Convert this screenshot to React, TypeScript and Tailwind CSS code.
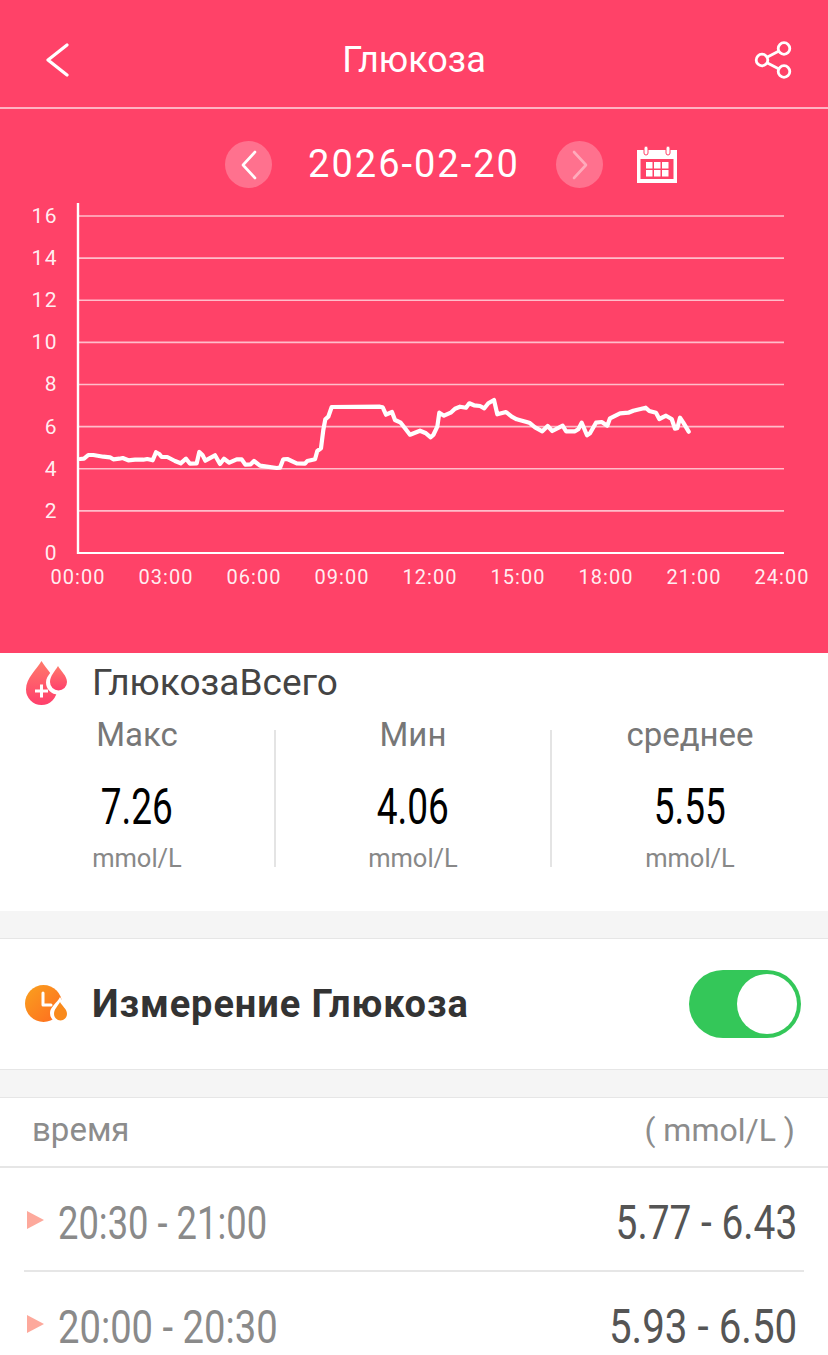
// traced from the chart at 3x: [x, y] -> x/3 + 60, y/3 + 380
const RAW = [
  [60,237],[72,236],[85,225],[100,225],[130,230],[150,232],[160,238],[178,236],[188,234],[205,241],[225,239],[250,239],[262,237],[278,241],[288,217],[298,222],[305,231],[322,231],[345,243],[362,250],[378,236],[390,251],[410,250],[418,216],[428,226],[436,242],[465,226],[480,252],[492,236],[508,248],[530,238],[545,238],[556,254],[572,253],[582,243],[600,257],[620,260],[650,264],[660,263],[670,238],[682,237],[710,250],[735,251],[742,243],[765,238],[772,213],[783,205],[790,150],[796,118],[805,110],[815,81],[960,80],[968,82],[978,104],[996,96],[1005,120],[1022,128],[1035,145],[1050,164],[1080,152],[1098,160],[1112,172],[1120,165],[1132,140],[1138,98],[1152,107],[1172,98],[1185,86],[1200,80],[1218,83],[1228,70],[1242,76],[1260,78],[1273,85],[1285,70],[1302,60],[1312,103],[1338,96],[1355,110],[1370,118],[1408,128],[1425,142],[1447,154],[1463,138],[1477,153],[1508,137],[1518,154],[1545,154],[1555,148],[1565,128],[1581,166],[1590,160],[1608,128],[1625,126],[1642,137],[1650,115],[1680,100],[1705,98],[1720,92],[1757,83],[1768,93],[1788,98],[1798,117],[1818,107],[1835,117],[1845,146],[1852,145],[1860,113],[1870,128],[1886,155],
];
const LINE = RAW.map(([x, y]) => `${(x / 3 + 60).toFixed(1)},${(y / 3 + 380).toFixed(1)}`).join(" ");

const Y_TICKS = [16, 14, 12, 10, 8, 6, 4, 2, 0];
const X_TICKS = ["00:00", "03:00", "06:00", "09:00", "12:00", "15:00", "18:00", "21:00", "24:00"];

function Chart() {
  return (
    <svg viewBox="0 190 828 463" className="block w-[828px] h-[463px]" fontFamily="Roboto, sans-serif" fill="#fff">
      {Y_TICKS.map((v, i) => {
        const y = 216 + i * 42.12;
        return (
          <g key={v}>
            {v > 0 && <line x1="78" x2="784" y1={y} y2={y} stroke="#fff" strokeOpacity="0.65" strokeWidth="1.6" />}
            <text x="58" y={y + 7} textAnchor="end" fontSize="21" letterSpacing="1.5" fillOpacity="0.92">{v}</text>
          </g>
        );
      })}
      <line x1="78" x2="78" y1="203" y2="554" stroke="#fff" strokeWidth="2.4" />
      <line x1="78" x2="784" y1="553" y2="553" stroke="#fff" strokeWidth="2" />
      {X_TICKS.map((t, i) => (
        <text key={t} x={78 + i * 88} y="584" textAnchor="middle" fontSize="20" fillOpacity="0.92" letterSpacing="1">{t}</text>
      ))}
      <polyline points={LINE} fill="none" stroke="#fff" strokeWidth="4.2" strokeLinejoin="round" strokeLinecap="round" />
    </svg>
  );
}

function BackIcon() {
  return (
    <svg viewBox="0 0 23 34" className="w-[23px] h-[34px]" fill="none" stroke="#fff" strokeWidth="3.2" strokeLinecap="round" strokeLinejoin="round">
      <path d="M21 2 2 17l19 15" />
    </svg>
  );
}

function ShareIcon() {
  return (
    <svg viewBox="0 0 38 38" className="w-[38px] h-[38px]" fill="none" stroke="#fff" strokeWidth="2.8">
      <circle cx="30" cy="7.500" r="5.800" />
      <circle cx="30" cy="30.500" r="5.800" />
      <circle cx="8" cy="19" r="5.800" />
      <path d="M13 16.300 25 10M13 21.700 25 28" />
    </svg>
  );
}

function Caret({ dir, className }: { dir: "left" | "right"; className?: string }) {
  return (
    <svg viewBox="0 0 18 30" className={`w-[18px] h-[30px] ${className ?? ""}`} fill="none" stroke="#fff" strokeWidth="2.6" strokeLinecap="round" strokeLinejoin="round">
      <path d={dir === "left" ? "M15 2 3 15l12 13" : "M3 2l12 13L3 28"} />
    </svg>
  );
}

function DropsIcon() {
  return (
    <svg viewBox="0 0 42 44" className="w-[42px] h-[44px]">
      <defs>
        <linearGradient id="dropA" x1="0" y1="0" x2="0" y2="1">
          <stop offset="0" stopColor="#ff7a6b" />
          <stop offset="1" stopColor="#ff3f6c" />
        </linearGradient>
      </defs>
      <path d="M15.500 0C11 8 0 17 0 28.500a15.500 15.500 0 0 0 31 0C31 17 20 8 15.500 0Z" fill="url(#dropA)" />
      <path d="M32 2C28 9 20 14 20 21.500a12 12 0 0 0 24 0C44 14 36 9 32 2Z" fill="#fff" />
      <path d="M32 5C29 10 24 15 24 21a8.500 8.500 0 0 0 17 0C41 15 35 10 32 5Z" fill="url(#dropA)" />
      <path d="M14 23.500h3v5h5v3h-5v5h-3v-5h-5v-3h5Z" fill="#fff" />
    </svg>
  );
}

function ClockDropIcon() {
  return (
    <svg viewBox="0 0 44 38" className="w-[44px] h-[38px]">
      <defs>
        <linearGradient id="clockA" x1="0" y1="0" x2="1" y2="1">
          <stop offset="0" stopColor="#f9a11f" />
          <stop offset="1" stopColor="#ff6a1f" />
        </linearGradient>
      </defs>
      <circle cx="18.500" cy="18.500" r="18.500" fill="url(#clockA)" />
      <path d="M18 8v12h8" fill="none" stroke="#fff" strokeWidth="3" strokeLinecap="round" strokeLinejoin="round" />
      <path d="M35 12C32 18 25 22 25 28a10 10 0 0 0 20 0C45 22 38 18 35 12Z" fill="#fff" />
      <path d="M35 17C33 21 29 24 29 29a6.500 6.500 0 0 0 13 0C42 24 37 21 35 17Z" fill="#f98a1c" />
    </svg>
  );
}

function CalendarIcon() {
  return (
    <svg viewBox="0 0 40 37" className="w-[40px] h-[37px]" fill="#fff">
      <path fillRule="evenodd" d="M0 4h40v33H0ZM3.500 13v20h33V13Z" />
      <rect x="7" y="0" width="4" height="9" rx="2" stroke="#ff4268" strokeWidth="1" />
      <rect x="29" y="0" width="4" height="9" rx="2" stroke="#ff4268" strokeWidth="1" />
      {[9, 17, 25].map((x) =>
        [16, 24].map((y) => <rect key={`${x}-${y}`} x={x} y={y} width="6.500" height="6.500" />)
      )}
    </svg>
  );
}

function Stat({ label, value }: { label: string; value: string }) {
  return (
    <div className="flex flex-col items-center pt-[1px]">
      <div className="h-[34px] text-[33px] leading-[34px] text-[#777]">{label}</div>
      <div className="mt-[32px] h-[46px] text-[50px] leading-[46px] text-black scale-x-[0.74]">{value}</div>
      <div className="mt-[14px] text-[25.500px] leading-[28px] text-[#888]">mmol/L</div>
    </div>
  );
}

function Row({ time, range, timeClass, rangeClass }: { time: string; range: string; timeClass: string; rangeClass: string }) {
  return (
    <div className="h-[104px] shrink-0 mx-[24px] border-b-2 border-[#e6e6e6] flex items-center justify-between">
      <div className="flex items-center">
        <div className="ml-[3px] mt-[2px] w-0 h-0 border-y-[9px] border-y-transparent border-l-[17px] border-l-[#fda99c]" />
        <div className={`ml-[14px] mt-[8px] text-[46px] text-[#8a8a8a] origin-left whitespace-nowrap ${timeClass}`}>{time}</div>
      </div>
      <div className={`mr-[7px] mt-[8px] text-[48px] text-[#555] origin-right whitespace-nowrap ${rangeClass}`}>{range}</div>
    </div>
  );
}

export default function App() {
  return (
    <div className="w-[828px] h-[1355px] overflow-hidden bg-white font-['Roboto',sans-serif]">
      <div className="bg-[#ff4268] text-white">
        <div className="h-[109px] border-b-2 border-[#ffb3c2] flex items-center justify-between pt-[12px] pl-[46px] pr-[36px] relative">
          <BackIcon />
          <div className="absolute inset-x-0 text-center text-[36px]">Глюкоза</div>
          <ShareIcon />
        </div>
        <div className="h-[81px] flex items-center pl-[225px] pt-[30px]">
          <div className="w-[47px] h-[47px] rounded-full bg-white/25 flex items-center justify-center">
            <Caret dir="left" />
          </div>
          <div className="w-[284px] text-center text-[38px] tracking-[2px]">2026-02-20</div>
          <div className="w-[47px] h-[47px] rounded-full bg-white/25 flex items-center justify-center">
            <Caret dir="right" className="opacity-40" />
          </div>
          <div className="ml-[34px]"><CalendarIcon /></div>
        </div>
        <Chart />
      </div>

      <div className="h-[258px] bg-white">
        <div className="h-[58px] flex items-center pl-[26px] pt-[1px]">
          <DropsIcon />
          <div className="ml-[24px] text-[37px] text-[#444]">ГлюкозаВсего</div>
        </div>
        <div className="grid grid-cols-3 pt-[6px]">
          <div className="border-r-2 border-[#e4e4e4] h-[137px] mt-[13px] -mb-[13px]"><div className="-mt-[13px]"><Stat label="Макс" value="7.26" /></div></div>
          <div className="border-r-2 border-[#e4e4e4] h-[137px] mt-[13px] -mb-[13px]"><div className="-mt-[13px]"><Stat label="Мин" value="4.06" /></div></div>
          <div><Stat label="среднее" value="5.55" /></div>
        </div>
      </div>

      <div className="h-[28px] bg-[#f5f5f5] border-b border-[#e6e6e6]" />

      <div className="h-[130px] flex items-center justify-between pl-[25px] pr-[27px]">
        <div className="flex items-center">
          <ClockDropIcon />
          <div className="ml-[23px] text-[38px] font-bold text-[#333] tracking-[0.9px]">Измерение Глюкоза</div>
        </div>
        <div className="w-[112px] h-[68px] rounded-full bg-[#34c759] flex items-center justify-end pr-[4px]">
          <div className="w-[60px] h-[60px] rounded-full bg-white" />
        </div>
      </div>

      <div className="h-[29px] bg-[#f5f5f5] border-y border-[#e6e6e6]" />

      <div className="h-[70px] border-b-2 border-[#e6e6e6] flex items-center justify-between pb-[4px] pl-[32px] pr-[33px] text-[#8c8c8c]">
        <div className="text-[33px]">время</div>
        <div className="text-[32px]">( mmol/L )</div>
      </div>

      <Row time="20:30 - 21:00" range="5.77 - 6.43" timeClass="scale-x-[0.79]" rangeClass="scale-x-[0.81]" />
      <Row time="20:00 - 20:30" range="5.93 - 6.50" timeClass="scale-x-[0.83]" rangeClass="scale-x-[0.84]" />
    </div>
  );
}
